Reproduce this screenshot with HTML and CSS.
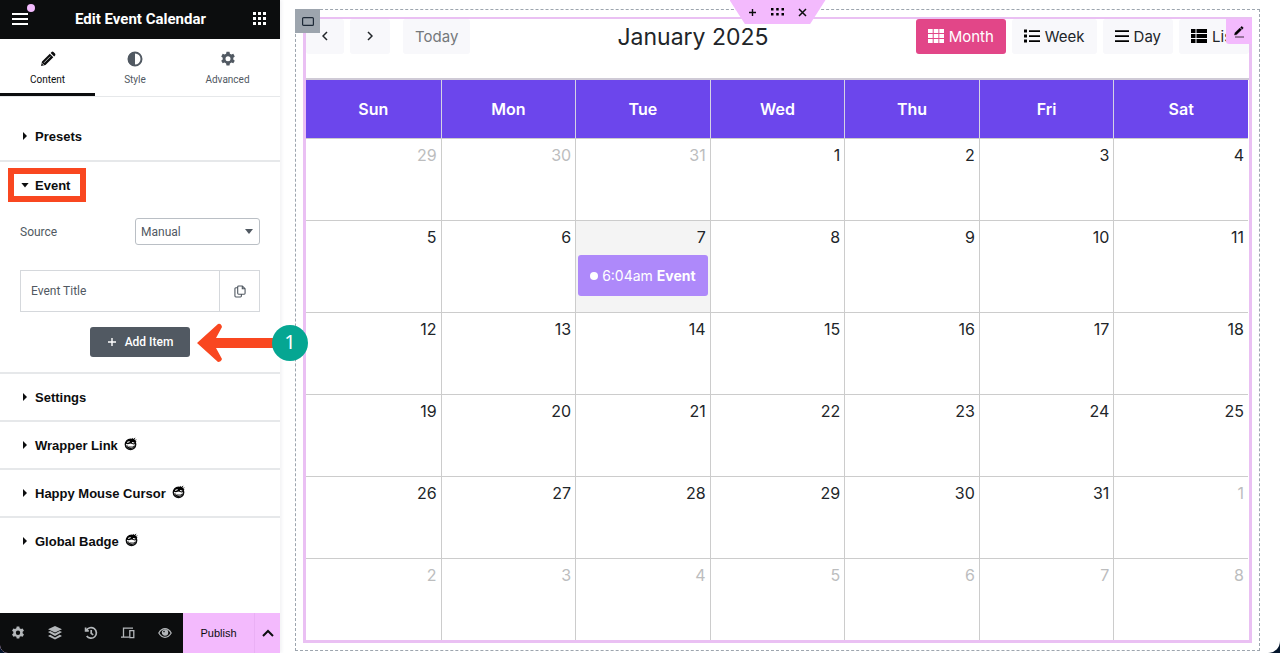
FILE: index.html
```html
<!DOCTYPE html>
<html lang="en">
<head>
<meta charset="utf-8">
<title>Edit Event Calendar</title>
<link rel="stylesheet" href="styles.css">
</head>
<body>
<svg class="sprite" aria-hidden="true">
  <symbol id="gear" viewBox="0 0 16 16"><path fill-rule="evenodd" d="M6.500 0.700h3l.4 2 1.500.8 1.900-.7 1.500 2.600-1.500 1.300v1.700l1.500 1.300-1.500 2.600-1.900-.7-1.500.8-.4 2h-3l-.4-2-1.500-.8-1.900.7-1.500-2.600 1.500-1.300V6.700l-1.500-1.300 1.500-2.600 1.900.7 1.500-.8zM8 5.200a2.500 2.500 0 1 0 0 5 2.500 2.500 0 0 0 0-5z"/></symbol>
  <symbol id="happy" viewBox="0 0 14 14"><circle cx="6.500" cy="7.300" r="5.200" fill="#fff" stroke="#0c0d0e" stroke-width="1.400"/><path d="M1.300 6.500C2 3.200 4.600 1.500 7.500 2L9 .8 8.800 2.300 11.500.600 10.300 3l2.700-.6-2 1.700 1.700.2-1.400 1 .4 1.700-2 .5-3-.9-3 .6z"/><path d="M3.200 5.400l2.400-.9M8 5.500l2.300.5" stroke="#fff" stroke-width="1.100" fill="none"/><path d="M2.200 8.200c2.600 1 5.800 1.300 8.800.4-.5 1.900-2.200 3.300-4.500 3.300-2.200 0-3.900-1.600-4.300-3.700z"/><path d="M3.300 9c2 .7 4.300.8 6.300.3l-.7.9c-1.700.5-3.600.3-5.100-.4z" fill="#fff"/></symbol>
</svg>
<div class="app">
  <aside class="panel">
    <header class="panel-header">
      <button class="icon-button menu" aria-label="Menu"><svg width="16" height="12" viewBox="0 0 16 12"><path d="M0 1h16M0 6h16M0 11h16" stroke="#fff" stroke-width="2"/></svg><span class="dot"></span></button>
      <h1>Edit Event Calendar</h1>
      <button class="icon-button" aria-label="Widgets"><svg width="13" height="13" viewBox="0 0 13 13" fill="#fff"><path d="M0 0h3v3H0zM5 0h3v3H5zM10 0h3v3h-3zM0 5h3v3H0zM5 5h3v3H5zM10 5h3v3h-3zM0 10h3v3H0zM5 10h3v3H5zM10 10h3v3h-3z"/></svg></button>
    </header>
    <nav class="tabs">
      <button class="tab active"><svg width="16" height="16" viewBox="0 0 16 16"><path d="M1 15l1-4.500L9.800 2.700l3.500 3.500L5.500 14zM10.600 1.900l1-1q1-.7 1.900.1l1.500 1.500q.8.900.1 1.900l-1 1z"/><path d="M4 11.800L10.300 5.500M2 12.200L3.800 14" stroke="#fff" stroke-width=".7"/></svg>Content</button>
      <button class="tab"><svg width="16" height="16" viewBox="0 0 16 16"><circle cx="8" cy="8" r="6.500" fill="#fff" stroke="#515962" stroke-width="2"/><path d="M8 1a7 7 0 0 0 0 14z"/></svg>Style</button>
      <button class="tab"><svg width="16" height="16"><use href="#gear"/></svg>Advanced</button>
    </nav>
    <div class="sections">
      <section><button class="section-title"><span class="caret"></span>Presets</button></section>
      <section class="open">
        <button class="section-title" aria-expanded="true"><span class="caret down"></span>Event<span class="highlight"></span></button>
        <div class="controls">
          <div class="field">
            <label for="source">Source</label>
            <div class="select-wrap"><select id="source"><option>Manual</option></select></div>
          </div>
          <div class="repeater">
            <button class="item-title">Event Title</button>
            <button class="duplicate" aria-label="Duplicate"><svg width="12" height="13" viewBox="0 0 13 14" fill="none" stroke="#515962" stroke-width="1.200"><path d="M5 1h4l3 3v5q0 1-1 1H5q-1 0-1-1V2q0-1 1-1zM9 1v3h3M4 3H2q-1 0-1 1v8q0 1 1 1h5q1 0 1-1v-2"/></svg></button>
          </div>
          <button class="add-item"><svg width="10" height="10" viewBox="0 0 10 10"><path d="M5 1v8M1 5h8" stroke="#fff" stroke-width="1.400"/></svg>Add Item</button>
        </div>
      </section>
      <section><button class="section-title"><span class="caret"></span>Settings</button></section>
      <section><button class="section-title"><span class="caret"></span>Wrapper Link<svg class="happy"><use href="#happy"/></svg></button></section>
      <section><button class="section-title"><span class="caret"></span>Happy Mouse Cursor<svg class="happy"><use href="#happy"/></svg></button></section>
      <section><button class="section-title"><span class="caret"></span>Global Badge<svg class="happy"><use href="#happy"/></svg></button></section>
    </div>
    <footer class="panel-footer">
      <div class="tools">
        <button aria-label="Settings"><svg width="14" height="14"><use href="#gear"/></svg></button>
        <button aria-label="Structure"><svg width="16" height="16" viewBox="0 0 16 16"><path d="M8 1l7 3.300-7 3.300-7-3.300zM1 7l2.200-1L8 8.400 12.800 6 15 7 8 11zM1 11l2.200-1.200L8 12.400l4.800-2.600L15 11l-7 3.600z"/></svg></button>
        <button aria-label="History"><svg width="14" height="14" viewBox="0 0 14 14" fill="none" stroke="#b4b7ba" stroke-width="1.700"><path d="M2.400 4.400a5.300 5.300 0 1 1 .3 5.500M1.600 1.600v3.200h3.200M7.200 4v3.300l2 1.600"/></svg></button>
        <button aria-label="Responsive mode"><svg width="14" height="12" viewBox="0 0 14 12" fill="none" stroke="#b4b7ba" stroke-width="1.300"><path d="M12 1.200H2.500v8.300M0 10.200h8M8.800 3.700h4v7h-4z"/></svg></button>
        <button aria-label="Preview"><svg width="14" height="12" viewBox="0 0 14 12" fill="none" stroke="#b4b7ba" stroke-width="1.200"><path d="M.8 6Q3.300 1.700 7 1.700T13.200 6Q10.700 10.300 7 10.300T.8 6z"/><circle cx="7" cy="5.500" r="2.600" fill="#b4b7ba"/><circle cx="6" cy="4.600" r=".8" fill="#0c0d0e" stroke="none"/></svg></button>
      </div>
      <button class="publish">Publish</button>
      <button class="publish-more" aria-label="Save options"><svg width="12" height="8" viewBox="0 0 12 8"><path d="M1 7l5-5 5 5" fill="none" stroke="#0c0d0e" stroke-width="2"/></svg></button>
    </footer>
    <div class="callout">
      <svg width="78" height="40" viewBox="0 0 78 40"><path fill="#f94720" d="M0 20L21 1Q24 0 25 4L19 15H78V25H19L25 36Q24 39 21 39z"/></svg>
      <span>1</span>
    </div>
  </aside>
  <main class="preview">
    <div class="container">
      <button class="container-handle" aria-label="Container"><svg width="12" height="9" viewBox="0 0 12 9"><rect x=".6" y=".6" width="10.800" height="7.800" rx="1" fill="none" stroke="#1d2937" stroke-width="1.200"/></svg></button>
      <div class="container-actions">
        <button aria-label="Add"><svg width="9" height="9" viewBox="0 0 9 9"><path d="M4.500 1v7M1 4.500h7" stroke="#0c0d0e" stroke-width="1.400"/></svg></button>
        <button aria-label="Drag"><svg width="13" height="8" viewBox="0 0 13 8"><path d="M0 0h2.500v2.500H0zM5.200 0h2.500v2.500H5.200zM10.500 0H13v2.500h-2.500zM0 5h2.500v2.500H0zM5.200 5h2.500v2.500H5.200zM10.500 5H13v2.500h-2.500z"/></svg></button>
        <button aria-label="Delete"><svg width="9" height="9" viewBox="0 0 9 9"><path d="M1 1l7 7M8 1L1 8" stroke="#0c0d0e" stroke-width="1.500"/></svg></button>
      </div>
      <div class="widget">
        <button class="edit" aria-label="Edit widget"><svg width="10" height="12" viewBox="0 0 10 12"><path d="M.5 9L1 6.800 5.800 2 7.600 3.800 2.700 8.600zM6.500 1.400l.7-.7q.5-.4 1 0l.8.8q.4.500 0 1l-.7.700z" stroke="#0c0d0e" stroke-width=".4"/><path d="M1 11h9" stroke="#0c0d0e" stroke-width=".8"/></svg></button>
        <div class="toolbar">
          <div class="nav">
            <button class="prev" aria-label="Previous"><svg width="6" height="10" viewBox="0 0 6 10"><path d="M5 1L1 5l4 4" fill="none" stroke="#212529" stroke-width="1.500"/></svg></button>
            <button class="next" aria-label="Next"><svg width="6" height="10" viewBox="0 0 6 10"><path d="M1 1l4 4-4 4" fill="none" stroke="#212529" stroke-width="1.500"/></svg></button>
            <button class="today" disabled>Today</button>
          </div>
          <h2>January 2025</h2>
          <div class="views">
            <button class="selected"><svg width="16" height="14" viewBox="0 0 16 14"><path fill="#fff" d="M0 0h4.700v4H0zM5.700 0h4.700v4H5.700zM11.300 0H16v4h-4.700zM0 5h4.700v4H0zM5.700 5h4.700v4H5.700zM11.300 5H16v4h-4.700zM0 10h4.700v4H0zM5.700 10h4.700v4H5.700zM11.300 10H16v4h-4.700z"/></svg>Month</button>
            <button><svg width="16" height="14" viewBox="0 0 16 14"><path d="M0 .5h3v3H0zM0 5.500h3v3H0zM0 10.500h3v3H0zM5 1.200h11v1.700H5zM5 6.200h11v1.700H5zM5 11.200h11v1.700H5z"/></svg>Week</button>
            <button><svg width="14" height="14" viewBox="0 0 14 14"><path d="M0 1.200h14v1.700H0zM0 6.200h14v1.700H0zM0 11.200h14v1.700H0z"/></svg>Day</button>
            <button><svg width="16" height="14" viewBox="0 0 16 14"><path d="M0 0h4.500v4H0zM0 5h4.500v4H0zM0 10h4.500v4H0zM5.500 0H16v4H5.500zM5.500 5H16v4H5.500zM5.500 10H16v4H5.500z"/></svg>List</button>
          </div>
        </div>
        <table>
          <thead><tr><th>Sun</th><th>Mon</th><th>Tue</th><th>Wed</th><th>Thu</th><th>Fri</th><th>Sat</th></tr></thead>
          <tbody>
            <tr><td class="other">29</td><td class="other">30</td><td class="other">31</td><td>1</td><td>2</td><td>3</td><td>4</td></tr>
            <tr><td>5</td><td>6</td><td class="current">7<a class="event" href="#"><i></i><span>6:04am</span><b>Event</b></a></td><td>8</td><td>9</td><td>10</td><td>11</td></tr>
            <tr><td>12</td><td>13</td><td>14</td><td>15</td><td>16</td><td>17</td><td>18</td></tr>
            <tr><td>19</td><td>20</td><td>21</td><td>22</td><td>23</td><td>24</td><td>25</td></tr>
            <tr><td>26</td><td>27</td><td>28</td><td>29</td><td>30</td><td>31</td><td class="other">1</td></tr>
            <tr><td class="other">2</td><td class="other">3</td><td class="other">4</td><td class="other">5</td><td class="other">6</td><td class="other">7</td><td class="other">8</td></tr>
          </tbody>
        </table>
      </div>
    </div>
  </main>
</div>
</body>
</html>
```
FILE: styles.css
```css
* { box-sizing: border-box; }
body { margin: 0; background: #03152b; font-family: Roboto, "Liberation Sans", sans-serif; color: #0c0d0e; }
button { margin: 0; padding: 0; border: 0; background: none; font: inherit; color: inherit; }
svg { display: block; flex: none; }
.sprite { position: absolute; width: 0; height: 0; }
.app { display: flex; min-height: 100vh; background: #fff; border-radius: 0 0 12px 8px; }

/* Editor panel */
.panel { position: relative; display: flex; flex-direction: column; width: 280px; flex: none; box-shadow: 2px 0 3px #f3f3f5; }
.panel-header { display: flex; align-items: center; justify-content: space-between; height: 39px; padding: 0 14px 2px 12px; background: #0c0d0e; color: #fff; }
.panel-header h1 { margin: 0; font-size: 15px; line-height: 20px; font-weight: 700; }
.icon-button { position: relative; }
.menu .dot { position: absolute; top: -9px; right: -7px; width: 8px; height: 8px; border-radius: 50%; background: #f3bafd; }
.tabs { display: grid; grid-template-columns: 95px 80px 1fr; height: 58px; border-bottom: 1px solid #e6e8ea; }
.tab { display: flex; flex-direction: column; align-items: center; gap: 5px; padding-top: 12px; font-size: 10px; line-height: 16px; color: #515962; fill: #515962; border-bottom: 3px solid transparent; }
.tab.active { color: #0c0d0e; fill: #0c0d0e; border-color: #0c0d0e; }
.sections { flex: 1; padding-top: 16px; }
section { border-bottom: 2px solid #e6e8ea; }
section:last-child { border-bottom: 0; }
section:first-child { padding-bottom: 1px; }
.section-title { position: relative; display: flex; align-items: center; width: 100%; height: 46px; padding-left: 23px; font-family: "Liberation Sans", Arial, sans-serif; font-size: 13px; font-weight: 700; }
.caret { width: 12px; height: 8px; }
.caret::before { content: ""; display: block; width: 4px; height: 8px; background: #0c0d0e; clip-path: polygon(0 0, 100% 50%, 0 100%); }
.caret.down { height: 5px; }
.caret.down::before { width: 8px; height: 5px; margin-left: -2px; clip-path: polygon(0 0, 100% 0, 50% 100%); }
.happy { width: 14px; height: 14px; margin: 0 0 2px 6px; }
.highlight { position: absolute; left: 8px; top: 6px; width: 78px; height: 34px; border: 6px solid #f94720; }
.controls { display: flex; flex-direction: column; padding: 10px 20px 15px; font-size: 12px; color: #515962; }
.field { display: flex; align-items: center; justify-content: space-between; margin-bottom: 25px; }
.select-wrap { position: relative; width: 125px; }
.select-wrap::after { content: ""; position: absolute; right: 7px; top: 11px; width: 8px; height: 5px; background: #515962; clip-path: polygon(0 0, 100% 0, 50% 100%); pointer-events: none; }
select { display: block; width: 100%; height: 27px; padding: 0 5px; appearance: none; border: 1px solid #babfc5; border-radius: 3px; background: #fff; font: inherit; color: inherit; }
.repeater { display: flex; height: 42px; border: 1px solid #d5d8dc; margin-bottom: 15px; }
.item-title { flex: 1; padding-left: 10px; text-align: left; }
.duplicate { display: flex; align-items: center; justify-content: center; width: 40px; border-left: 1px solid #d5d8dc; }
.add-item { display: flex; align-items: center; justify-content: center; gap: 8px; align-self: center; width: 100px; height: 30px; border-radius: 3px; background: #515962; color: #fff; font-weight: 500; }
.panel-footer { display: flex; height: 40px; background: #f3bafd; border-radius: 0 0 0 8px; overflow: hidden; }
.tools { display: flex; width: 183px; background: #0c0d0e; }
.tools button { flex: 1; display: flex; align-items: center; justify-content: center; fill: #b4b7ba; }
.publish { flex: 1; font-family: "Liberation Sans", Arial, sans-serif; font-size: 11px; border-right: 1px solid #eab0f5; }
.publish-more { display: flex; align-items: center; justify-content: center; width: 25px; }
.callout { position: absolute; z-index: 2; left: 197px; top: 323px; display: flex; align-items: center; }
.callout span { width: 36px; height: 36px; margin-left: -3px; border-radius: 50%; background: #05a692; color: #fff; font: 20px/34px "Noto Sans", sans-serif; text-align: center; }

/* Page preview */
.preview { flex: 1; min-width: 0; padding: 9px 20px 2px 15px; font-family: Inter, sans-serif; }
.container { position: relative; height: 100%; padding: 7px; border: 1px dashed #9da5ae; }
.container-handle { position: absolute; z-index: 1; left: -1px; top: -1px; display: flex; align-items: center; justify-content: center; width: 25px; height: 24px; background: #9da5ae; }
.container-actions { position: absolute; z-index: 1; top: -10px; left: 50%; display: flex; align-items: center; justify-content: center; gap: 14px; width: 96px; height: 24px; margin-left: -48px; background: #f3bafd; clip-path: polygon(0 0, 100% 0, 84% 100%, 16% 100%); }
.widget { position: relative; border: 3px solid #eac0f3; border-top-width: 2px; }
.edit { position: absolute; top: 0; right: -3px; display: flex; align-items: center; justify-content: center; width: 26px; height: 25px; background: #f3bafd; border-radius: 0 0 0 3px; }
.toolbar { display: flex; align-items: flex-start; justify-content: space-between; height: 59px; }
.nav, .views { display: flex; gap: 6px; }
.toolbar button:not(.edit) { display: flex; align-items: center; justify-content: center; gap: 5px; height: 35px; padding: 0 12px 1px; border-radius: 3px; background: #f8f8fb; color: #212529; font-size: 15px; }
.toolbar .prev { width: 38px; }
.toolbar .next { width: 40px; }
.toolbar button.today { margin-left: 7px; color: #75787b; }
.toolbar button.selected { background: #e24688; color: #fff; }
.toolbar h2 { margin: 0; font-size: 23px; line-height: 36px; font-weight: 400; color: #212529; }
table { width: 100%; table-layout: fixed; border-spacing: 0; border-top: 2px solid #cfcad6; padding-right: 1px; font-size: 16px; color: #212529; }
th { height: 58px; padding: 0; background: #6c46ec; color: #fff; font-weight: 600; border-left: 1px solid #d5d2e4; }
td { height: 82px; padding: 4px 4px 0; vertical-align: top; text-align: right; line-height: 24px; border-left: 1px solid #ccc; border-top: 1px solid #ccc; }
th:first-child, td:first-child { border-left: 0; }
.other { color: #bcbdbe; }
td.current { padding: 4px 4px 16px 2px; background: #f4f4f4; }
.event { display: flex; align-items: center; justify-content: center; gap: 4px; height: 41px; margin: 6px -2px 0 0; border-radius: 3px; background: #ae89fa; color: #fff; font-size: 14px; text-decoration: none; }
.event i { width: 8px; height: 8px; border-radius: 50%; background: #fff; }
```
